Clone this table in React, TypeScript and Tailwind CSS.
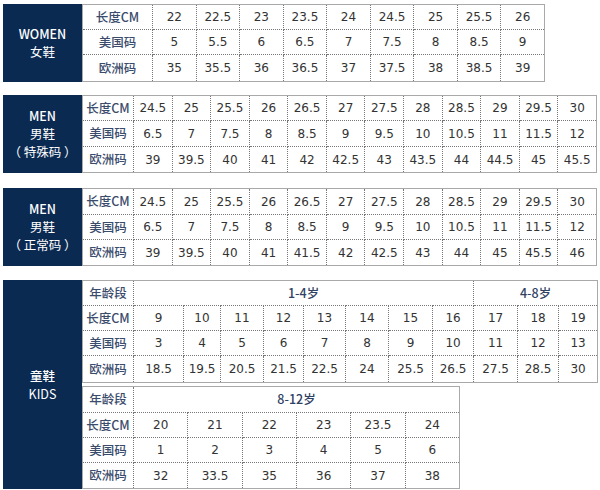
const cjk = "font-['Noto_Sans_CJK_SC',sans-serif]";
const num = "font-['DejaVu_Sans','Noto_Sans_CJK_SC',sans-serif]";

type Row = { label: string; cells: (string | number)[] };

const women: Row[] = [
  { label: "长度CM", cells: [22, 22.5, 23, 23.5, 24, 24.5, 25, 25.5, 26] },
  { label: "美国码", cells: [5, 5.5, 6, 6.5, 7, 7.5, 8, 8.5, 9] },
  { label: "欧洲码", cells: [35, 35.5, 36, 36.5, 37, 37.5, 38, 38.5, 39] },
];

const menSpecial: Row[] = [
  { label: "长度CM", cells: [24.5, 25, 25.5, 26, 26.5, 27, 27.5, 28, 28.5, 29, 29.5, 30] },
  { label: "美国码", cells: [6.5, 7, 7.5, 8, 8.5, 9, 9.5, 10, 10.5, 11, 11.5, 12] },
  { label: "欧洲码", cells: [39, 39.5, 40, 41, 42, 42.5, 43, 43.5, 44, 44.5, 45, 45.5] },
];

const menNormal: Row[] = [
  { label: "长度CM", cells: [24.5, 25, 25.5, 26, 26.5, 27, 27.5, 28, 28.5, 29, 29.5, 30] },
  { label: "美国码", cells: [6.5, 7, 7.5, 8, 8.5, 9, 9.5, 10, 10.5, 11, 11.5, 12] },
  { label: "欧洲码", cells: [39, 39.5, 40, 41, 41.5, 42, 42.5, 43, 44, 45, 45.5, 46] },
];

const kidsA: Row[] = [
  { label: "长度CM", cells: [9, 10, 11, 12, 13, 14, 15, 16, 17, 18, 19] },
  { label: "美国码", cells: [3, 4, 5, 6, 7, 8, 9, 10, 11, 12, 13] },
  { label: "欧洲码", cells: [18.5, 19.5, 20.5, 21.5, 22.5, 24, 25.5, 26.5, 27.5, 28.5, 30] },
];

const kidsB: Row[] = [
  { label: "长度CM", cells: [20, 21, 22, 23, 23.5, 24] },
  { label: "美国码", cells: [1, 2, 3, 4, 5, 6] },
  { label: "欧洲码", cells: [32, 33.5, 35, 36, 37, 38] },
];

const kidsAWidths = [
  "w-[50px]", "w-[37px]", "w-[43px]", "w-[40px]", "w-[42px]", "w-[43px]",
  "w-[44px]", "w-[41px]", "w-[44px]", "w-[41px]", "w-[39px]",
];

const cellCls = "border border-dotted border-[#777] text-center p-0";

export default function App() {
  return (
    <div className="w-[600px] h-[490px] bg-white pt-[4px] overflow-hidden">
      {/* Women */}
      <Section lines={["WOMEN", "女鞋"]}>
        <SizeTable width="w-[463px]" labelW="w-[70px]" rows={women} rowH={["h-[25px]", "h-[25px]", "h-[27px]"]} />
      </Section>

      {/* Men special */}
      <div className="mt-[13px]">
        <Section lines={["MEN", "男鞋", "（ 特殊码 ）"]}>
          <SizeTable width="w-[515px]" labelW="w-[51px]" rows={menSpecial} rowH={["h-[25px]", "h-[26px]", "h-[26px]"]} />
        </Section>
      </div>

      {/* Men normal */}
      <div className="mt-[15px]">
        <Section lines={["MEN", "男鞋", "（ 正常码 ）"]}>
          <SizeTable width="w-[515px]" labelW="w-[51px]" rows={menNormal} rowH={["h-[26px]", "h-[25px]", "h-[26px]"]} />
        </Section>
      </div>

      {/* Kids */}
      <div className="mt-[14px]">
        <Section lines={["童鞋", "KIDS"]}>
          <div className="flex flex-col gap-[3px]">
            <table className="table-fixed border-collapse border border-solid border-[#a9a9a9] w-[515px] bg-white">
              <colgroup>
                <col className="w-[51px]" />
                {kidsAWidths.map((w, i) => (
                  <col key={i} className={w} />
                ))}
              </colgroup>
              <tbody>
                <tr className="h-[25px]">
                  <LabelCell text="年龄段" />
                  <td colSpan={8} className={`${cellCls} ${cjk} text-[12.5px] font-medium text-[#2f4265]`}>1-4岁</td>
                  <td colSpan={3} className={`${cellCls} ${cjk} text-[12.5px] font-medium text-[#2f4265]`}>4-8岁</td>
                </tr>
                {kidsA.map((r, i) => (
                  <DataRow key={r.label} row={r} h={i === 2 ? "h-[27px]" : "h-[25px]"} />
                ))}
              </tbody>
            </table>
            <table className="table-fixed border-collapse border border-solid border-[#a9a9a9] w-[378px] bg-white">
              <colgroup>
                <col className="w-[51px]" />
                {kidsB[0].cells.map((_, i) => (
                  <col key={i} />
                ))}
              </colgroup>
              <tbody>
                <tr className="h-[26px]">
                  <LabelCell text="年龄段" />
                  <td colSpan={6} className={`${cellCls} ${cjk} text-[12.5px] font-medium text-[#2f4265]`}>8-12岁</td>
                </tr>
                {kidsB.map((r, i) => (
                  <DataRow key={r.label} row={r} h={i === 2 ? "h-[26px]" : "h-[25px]"} />
                ))}
              </tbody>
            </table>
          </div>
        </Section>
      </div>
    </div>
  );
}

function Section({ lines, children }: { lines: string[]; children: React.ReactNode }) {
  return (
    <div className="flex items-stretch pl-[3px]">
      <div
        className={`w-[79px] shrink-0 bg-[#0b2a52] flex flex-col items-center justify-center text-white text-[12.5px] leading-[18px] ${cjk}`}
      >
        {lines.map((l, i) => (
          <span key={i} className={`whitespace-pre ${i === 0 ? "font-medium" : "font-normal"}`}>
            {l}
          </span>
        ))}
      </div>
      {children}
    </div>
  );
}

function SizeTable({
  width,
  labelW,
  rows,
  rowH,
}: {
  width: string;
  labelW: string;
  rows: Row[];
  rowH: string[];
}) {
  return (
    <table className={`table-fixed border-collapse border border-solid border-[#a9a9a9] bg-white ${width}`}>
      <colgroup>
        <col className={labelW} />
        {rows[0].cells.map((_, i) => (
          <col key={i} />
        ))}
      </colgroup>
      <tbody>
        {rows.map((r, i) => (
          <DataRow key={r.label} row={r} h={rowH[i]} />
        ))}
      </tbody>
    </table>
  );
}

function LabelCell({ text }: { text: string }) {
  return (
    <td className={`${cellCls} ${cjk} text-[12.5px] font-medium text-[#3a4b6c] whitespace-nowrap`}>
      {text}
    </td>
  );
}

function DataRow({ row, h }: { row: Row; h: string }) {
  return (
    <tr className={h}>
      <LabelCell text={row.label} />
      {row.cells.map((c, i) => (
        <td key={i} className={`${cellCls} ${num} text-[12px] text-[#333]`}>
          {c}
        </td>
      ))}
    </tr>
  );
}
